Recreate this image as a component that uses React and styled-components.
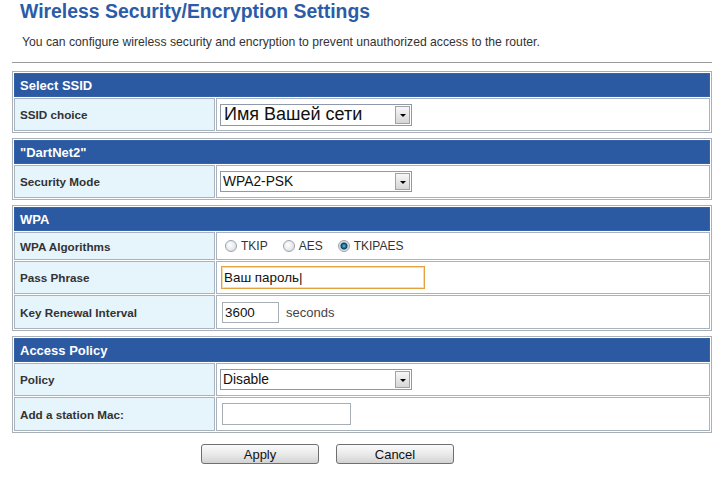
import React from 'react';
import styled, { createGlobalStyle } from 'styled-components';

const GlobalStyle = createGlobalStyle`
  body {
    margin: 0;
    background: #ffffff;
    font-family: "Liberation Sans", Arial, sans-serif;
  }
`;

const Page = styled.div`
  width: 723px;
  padding: 0 11px 0 12px;
  box-sizing: border-box;
`;

const Title = styled.h1`
  margin: 0;
  padding-left: 8px;
  font-size: 19.4px;
  line-height: 22px;
  font-weight: bold;
  color: #2a5ca8;
`;

const Intro = styled.p`
  margin: 13px 0 0 10px;
  font-size: 12.2px;
  line-height: 15px;
  color: #333333;
`;

const Rule = styled.hr`
  margin: 12px 0 8px;
  height: 0;
  border: 0;
  border-top: 1px solid #9a9a9a;
`;

const Section = styled.table`
  width: 700px;
  border: 1px solid #a9b0b8;
  border-spacing: 1px;
  margin: 0 0 5px;
`;

const HeadCell = styled.td`
  height: 24px;
  box-sizing: border-box;
  padding: 0 5px;
  background: #2b5aa3;
  border: 1px solid #3563ab;
  color: #ffffff;
  font-size: 13px;
  font-weight: bold;
`;

const Label = styled.td`
  width: 201px;
  height: ${(p) => p.$h}px;
  box-sizing: border-box;
  padding: 0 5px;
  background: #e6f4fc;
  border: 1px solid #a9b3bd;
  color: #333333;
  font-size: 11.7px;
  font-weight: bold;
`;

const Value = styled.td`
  box-sizing: border-box;
  padding: 0 2px;
  background: #ffffff;
  border: 1px solid #a9b3bd;
  font-size: 12px;
  color: #333333;
`;

const SelectBox = styled.div`
  position: relative;
  width: 192px;
  height: ${(p) => (p.$big ? 22 : 21)}px;
  box-sizing: border-box;
  margin-left: 1px;
  border: 1px solid #8e9aa7;
  background: #ffffff;
  display: flex;
  align-items: center;
  padding-left: ${(p) => (p.$big ? 3 : 2)}px;
  font-size: ${(p) => (p.$big ? 18 : 13.8)}px;
  color: #111111;
`;

const DropButton = styled.span`
  position: absolute;
  right: 1px;
  top: 1px;
  bottom: 1px;
  width: 15px;
  box-sizing: border-box;
  border: 1px solid #a2a2a2;
  background: linear-gradient(#f7f7f7, #d6d6d6);
  display: flex;
  align-items: center;
  justify-content: center;

  &::after {
    content: '';
    border-left: 3px solid transparent;
    border-right: 3px solid transparent;
    border-top: 3px solid #000000;
    margin-top: 1px;
  }
`;

const RadioRow = styled.div`
  display: flex;
  align-items: center;
  padding-left: 4px;
`;

const Radio = styled.input`
  appearance: none;
  width: 12px;
  height: 12px;
  margin: 0 4px 0 2px;
  border: 1px solid #9aa3ad;
  border-radius: 50%;
  background: radial-gradient(circle at 40% 40%, #ffffff, #d3d7db);

  &:checked {
    background: radial-gradient(circle, #5fb7d6 0, #1a6e93 2px, #0d3e57 3px, #d9dde0 4px, #e6e9ec 100%);
  }
`;

const RadioText = styled.label`
  margin-right: 13px;
  font-size: 12px;
  color: #333333;
`;

const TextBox = styled.input`
  width: ${(p) => p.$w}px;
  height: ${(p) => p.$hgt}px;
  box-sizing: border-box;
  margin: 0 0 0 ${(p) => p.$ml || 3}px;
  padding: 0 2px;
  border: 1px solid ${(p) => (p.$focus ? '#e3a23f' : '#a7aeb6')};
  box-shadow: ${(p) => (p.$focus ? 'inset 0 0 0 1px #f6dcaa' : 'none')};
  font-family: "Liberation Sans", Arial, sans-serif;
  font-size: 13.4px;
  color: #111111;
  outline: none;
  vertical-align: middle;
`;

const Unit = styled.span`
  margin-left: 7px;
  font-size: 13px;
  color: #444444;
  vertical-align: middle;
`;

const Buttons = styled.div`
  display: flex;
  gap: 17px;
  padding: 6px 0 0 189px;
`;

const Button = styled.button`
  width: 118px;
  height: 20px;
  border: 1px solid #6f6f6f;
  border-radius: 3px;
  background: linear-gradient(#fbfbfb, #e6e6e6 60%, #d2d2d2);
  font-family: "Liberation Sans", Arial, sans-serif;
  font-size: 13px;
  color: #111111;
  padding: 0;
`;

function Select({ value, big }) {
  return (
    <SelectBox $big={big}>
      {value}
      <DropButton />
    </SelectBox>
  );
}

export default function App() {
  return (
    <>
      <GlobalStyle />
      <Page>
        <Title>Wireless Security/Encryption Settings</Title>
        <Intro>
          You can configure wireless security and encryption to prevent unauthorized access to the router.
        </Intro>
        <Rule />

        <Section>
          <tbody>
            <tr>
              <HeadCell colSpan={2}>Select SSID</HeadCell>
            </tr>
            <tr>
              <Label $h={33}>SSID choice</Label>
              <Value>
                <Select value="Имя Вашей сети" big />
              </Value>
            </tr>
          </tbody>
        </Section>

        <Section>
          <tbody>
            <tr>
              <HeadCell colSpan={2}>"DartNet2"</HeadCell>
            </tr>
            <tr>
              <Label $h={33}>Security Mode</Label>
              <Value>
                <Select value="WPA2-PSK" />
              </Value>
            </tr>
          </tbody>
        </Section>

        <Section>
          <tbody>
            <tr>
              <HeadCell colSpan={2}>WPA</HeadCell>
            </tr>
            <tr>
              <Label $h={28}>WPA Algorithms</Label>
              <Value>
                <RadioRow>
                  <Radio type="radio" name="alg" id="tkip" />
                  <RadioText htmlFor="tkip">TKIP</RadioText>
                  <Radio type="radio" name="alg" id="aes" />
                  <RadioText htmlFor="aes">AES</RadioText>
                  <Radio type="radio" name="alg" id="both" defaultChecked />
                  <RadioText htmlFor="both">TKIPAES</RadioText>
                </RadioRow>
              </Value>
            </tr>
            <tr>
              <Label $h={33}>Pass Phrase</Label>
              <Value>
                <TextBox $w={204} $hgt={23} $ml={2} $focus defaultValue="Ваш пароль|" />
              </Value>
            </tr>
            <tr>
              <Label $h={34}>Key Renewal Interval</Label>
              <Value>
                <TextBox $w={57} $hgt={21} defaultValue="3600" />
                <Unit>seconds</Unit>
              </Value>
            </tr>
          </tbody>
        </Section>

        <Section>
          <tbody>
            <tr>
              <HeadCell colSpan={2}>Access Policy</HeadCell>
            </tr>
            <tr>
              <Label $h={33}>Policy</Label>
              <Value>
                <Select value="Disable" />
              </Value>
            </tr>
            <tr>
              <Label $h={34}>Add a station Mac:</Label>
              <Value>
                <TextBox $w={129} $hgt={22} />
              </Value>
            </tr>
          </tbody>
        </Section>

        <Buttons>
          <Button>Apply</Button>
          <Button>Cancel</Button>
        </Buttons>
      </Page>
    </>
  );
}
